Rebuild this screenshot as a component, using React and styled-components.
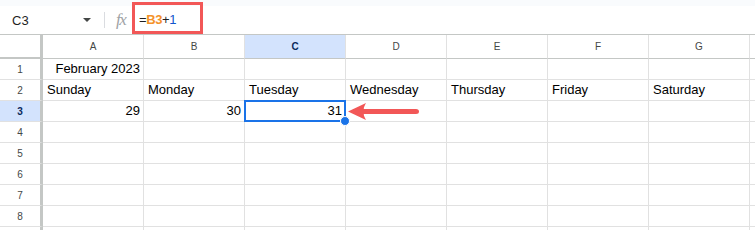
import React from "react";
import styled, { createGlobalStyle } from "styled-components";

const GlobalStyle = createGlobalStyle`
  html, body {
    margin: 0;
    padding: 0;
    background: #ffffff;
    font-family: "Liberation Sans", Arial, sans-serif;
    overflow: hidden;
  }
`;

const Page = styled.div`
  width: 755px;
  height: 230px;
  overflow: hidden;
  position: relative;
`;

const TopStrip = styled.div`
  height: 6px;
  background: #f9fbfd;
`;

const FormulaBar = styled.div`
  height: 28px;
  display: flex;
  align-items: center;
  border-bottom: 1px solid #c4c7c5;
  background: #fff;
`;

const NameBox = styled.div`
  width: 105px;
  height: 16px;
  display: flex;
  align-items: center;
  justify-content: space-between;
  padding: 0 13px 0 12px;
  box-sizing: border-box;
  font-size: 13px;
  color: #1f1f1f;
  border-right: 1px solid #dadce0;
`;

const Caret = styled.span`
  width: 0;
  height: 0;
  border-left: 4px solid transparent;
  border-right: 4px solid transparent;
  border-top: 4px solid #444746;
`;

const Fx = styled.span`
  margin-left: 11px;
  width: 16px;
  font-family: "Liberation Serif", "Times New Roman", serif;
  font-style: italic;
  font-size: 17px;
  letter-spacing: -1.5px;
  color: #a0a3a6;
`;

const Callout = styled.div`
  align-self: flex-start;
  margin-top: -4px;
  width: 71px;
  height: 32px;
  box-sizing: border-box;
  border: 3px solid #f25757;
  display: flex;
  align-items: center;
  padding: 2px 0 0 4px;
  font-size: 13px;
  letter-spacing: -0.4px;
  color: #1f1f1f;
  position: relative;
`;

const Token = styled.span`
  color: ${(p) => p.$color || "#1f1f1f"};
  font-weight: ${(p) => (p.$bold ? "bold" : "normal")};
`;

const Grid = styled.div`
  display: grid;
  grid-template-columns: 43px repeat(7, 101px) 1fr;
  grid-auto-rows: 21px;
  grid-template-rows: 24px;
  position: relative;
`;

const ColHead = styled.div`
  box-sizing: border-box;
  border-right: 1px solid #e1e1e1;
  border-bottom: 1px solid #c4c7c5;
  background: ${(p) => (p.$active ? "#d3e3fd" : "#ffffff")};
  color: ${(p) => (p.$active ? "#0b2a5c" : "#444746")};
  font-weight: ${(p) => (p.$active ? "bold" : "normal")};
  font-size: 10px;
  display: flex;
  align-items: center;
  justify-content: center;
`;

const Corner = styled.div`
  box-sizing: border-box;
  border-right: 3px solid #c4c7c5;
  border-bottom: 2px solid #c4c7c5;
  background: #fff;
`;

const RowHead = styled.div`
  box-sizing: border-box;
  border-right: 3px solid #c4c7c5;
  border-bottom: 1px solid #e1e1e1;
  background: ${(p) => (p.$active ? "#d3e3fd" : "#ffffff")};
  color: ${(p) => (p.$active ? "#0b2a5c" : "#444746")};
  font-weight: ${(p) => (p.$active ? "bold" : "normal")};
  font-size: 10px;
  display: flex;
  align-items: center;
  justify-content: center;
`;

const Cell = styled.div`
  box-sizing: border-box;
  border-right: 1px solid #e1e1e1;
  border-bottom: 1px solid #e1e1e1;
  font-size: 13px;
  line-height: 20px;
  color: #000;
  padding: 0 3px 0 4px;
  text-align: ${(p) => (p.$right ? "right" : "left")};
  white-space: nowrap;
  position: relative;

  ${(p) =>
    p.$selected &&
    `
    &::after {
      content: "";
      position: absolute;
      left: -1px;
      top: -1px;
      right: -1px;
      bottom: -1px;
      border: 2px solid #1a73e8;
      z-index: 2;
    }
  `}
`;

const Handle = styled.span`
  position: absolute;
  right: -5px;
  bottom: -5px;
  width: 8px;
  height: 8px;
  border-radius: 50%;
  background: #1a73e8;
  border: 1px solid #fff;
  z-index: 3;
`;

const Arrow = styled.svg`
  position: absolute;
  left: 346px;
  top: 65px;
  z-index: 4;
`;

const columns = ["A", "B", "C", "D", "E", "F", "G", ""];

const data = {
  1: { A: { text: "February 2023", right: true } },
  2: {
    A: { text: "Sunday" },
    B: { text: "Monday" },
    C: { text: "Tuesday" },
    D: { text: "Wednesday" },
    E: { text: "Thursday" },
    F: { text: "Friday" },
    G: { text: "Saturday" },
  },
  3: {
    A: { text: "29", right: true },
    B: { text: "30", right: true },
    C: { text: "31", right: true },
  },
};

const App = () => {
  const rows = [1, 2, 3, 4, 5, 6, 7, 8, 9];
  return (
    <Page>
      <GlobalStyle />
      <TopStrip />
      <FormulaBar>
        <NameBox>
          <span>C3</span>
          <Caret />
        </NameBox>
        <Fx>fx</Fx>
        <Callout>
          <Token>=</Token>
          <Token $color="#f4922a" $bold>B3</Token>
          <Token>+</Token>
          <Token $color="#1155cc">1</Token>
        </Callout>
      </FormulaBar>
      <Grid>
        <Corner />
        {columns.map((c, i) => (
          <ColHead key={i} $active={c === "C"}>
            {c}
          </ColHead>
        ))}
        {rows.map((r) => (
          <React.Fragment key={r}>
            <RowHead $active={r === 3}>{r < 9 ? r : ""}</RowHead>
            {columns.map((c, i) => {
              const cell = (data[r] && data[r][c]) || {};
              const selected = r === 3 && c === "C";
              return (
                <Cell key={i} $right={cell.right} $selected={selected}>
                  {cell.text}
                  {selected && <Handle />}
                </Cell>
              );
            })}
          </React.Fragment>
        ))}
        <Arrow width="76" height="24" viewBox="0 0 76 24">
          <path
            d="M2 11.5 L20 3 Q17 8.5 18 9 L70 9 Q73 9 73 11.5 Q73 14 70 14 L18 14 Q17 14.5 20 20 Z"
            fill="#f25757"
          />
        </Arrow>
      </Grid>
    </Page>
  );
};

export default App;
